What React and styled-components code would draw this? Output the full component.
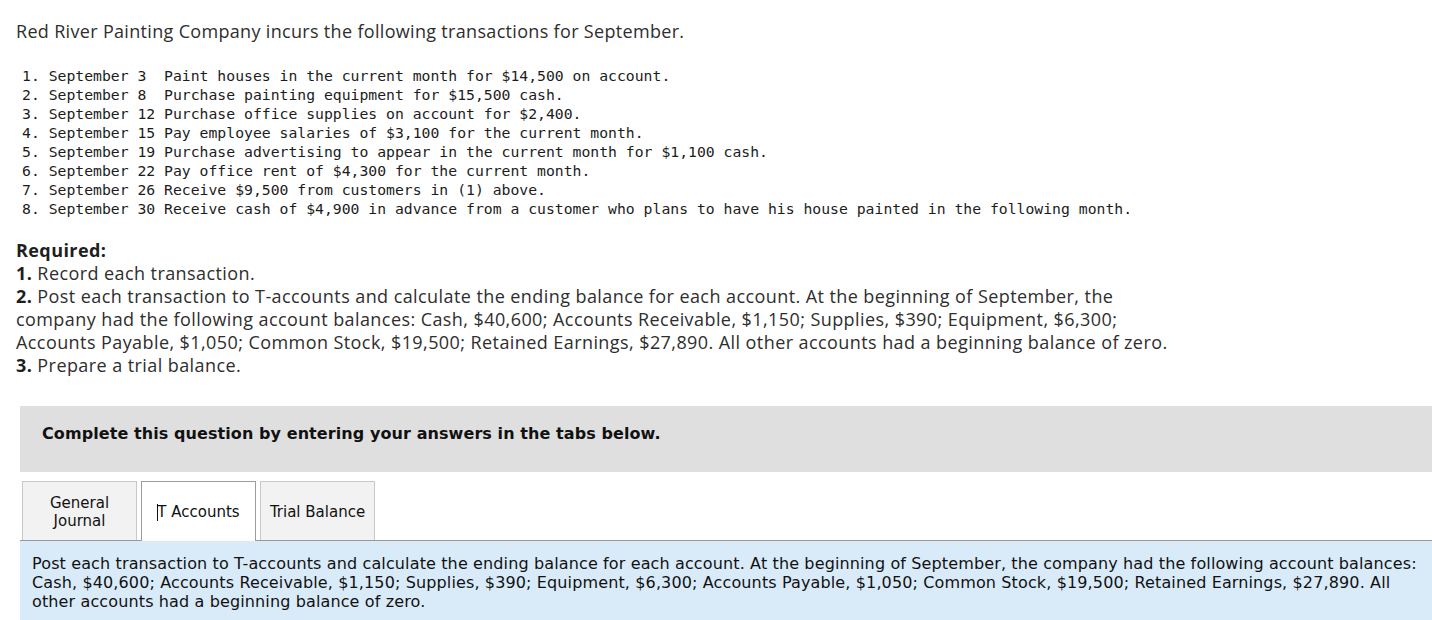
import React from "react";
import styled, { createGlobalStyle } from "styled-components";

const GlobalStyle = createGlobalStyle`
  html, body { margin: 0; padding: 0; background: #ffffff; }
  body { overflow-x: hidden; }
`;

const Page = styled.div`
  padding: 19px 0 0 16px;
  display: flex;
  flex-direction: column;
`;

const Title = styled.p`
  margin: 0;
  font-family: "Open Sans", "Liberation Sans", sans-serif;
  font-size: 18px;
  letter-spacing: 0.32px;
  line-height: 24px;
  color: #2e2e2e;
`;

const TxList = styled.div`
  margin: 23px 0 0 6px;
  font-family: "DejaVu Sans Mono", monospace;
  font-size: 14.75px;
  line-height: 19px;
  color: #1c1c1c;
  white-space: pre;
`;

const TxLine = styled.div``;

const Required = styled.div`
  margin-top: 21px;
  font-family: "Open Sans", "Liberation Sans", sans-serif;
  font-size: 18px;
  letter-spacing: 0.42px;
  line-height: 23px;
  color: #2e2e2e;
`;

const ReqLine = styled.div`
  white-space: nowrap;
`;

const Strong = styled.b`
  font-weight: 700;
  color: #1e1e1e;
`;

const Widget = styled.div`
  margin: 29px 0 0 4px;
  display: flex;
  flex-direction: column;
`;

const Instruction = styled.div`
  background: #dfdfdf;
  height: 66px;
  box-sizing: border-box;
  padding: 18px 22px 0;
  font-family: "DejaVu Sans", Verdana, sans-serif;
  font-weight: 700;
  font-size: 16px;
  letter-spacing: 0.08px;
  line-height: 19px;
  color: #111;
`;

const TabList = styled.div`
  margin-top: 9px;
  padding-left: 2px;
  display: flex;
  gap: 4px;
  align-items: flex-end;
`;

const Tab = styled.div`
  box-sizing: border-box;
  width: 115px;
  height: ${(p) => (p.$active ? "60px" : "59px")};
  margin-bottom: ${(p) => (p.$active ? "-1px" : "0")};
  position: relative;
  z-index: ${(p) => (p.$active ? 1 : 0)};
  background: ${(p) => (p.$active ? "#ffffff" : "#f2f2f2")};
  border: 1px solid ${(p) => (p.$active ? "#9c9c9c" : "#c8c8c8")};
  border-bottom: none;
  display: flex;
  align-items: center;
  justify-content: center;
  text-align: center;
  font-family: "DejaVu Sans", Verdana, sans-serif;
  font-size: 15px;
  line-height: 18px;
  color: #111;
  padding-top: ${(p) => (p.$active ? "1px" : "2px")};
`;

const Caret = styled.span`
  display: inline-block;
  width: 1px;
  height: 17px;
  background: #111;
  vertical-align: -4px;
  margin-right: -1px;
`;

const Panel = styled.div`
  border-top: 1px solid #999;
  background: #d9ebf9;
  padding: 13px 12px 10px;
  font-family: "DejaVu Sans", Verdana, sans-serif;
  font-size: 16px;
  letter-spacing: 0.13px;
  line-height: 19px;
  color: #111;
`;

const PanelLine = styled.div`
  white-space: nowrap;
`;

const transactions = [
  "1. September 3  Paint houses in the current month for $14,500 on account.",
  "2. September 8  Purchase painting equipment for $15,500 cash.",
  "3. September 12 Purchase office supplies on account for $2,400.",
  "4. September 15 Pay employee salaries of $3,100 for the current month.",
  "5. September 19 Purchase advertising to appear in the current month for $1,100 cash.",
  "6. September 22 Pay office rent of $4,300 for the current month.",
  "7. September 26 Receive $9,500 from customers in (1) above.",
  "8. September 30 Receive cash of $4,900 in advance from a customer who plans to have his house painted in the following month.",
];

export default function App() {
  return (
    <>
      <GlobalStyle />
      <Page>
        <Title>Red River Painting Company incurs the following transactions for September.</Title>
        <TxList>
          {transactions.map((t) => (
            <TxLine key={t}>{t}</TxLine>
          ))}
        </TxList>
        <Required>
          <ReqLine>
            <Strong>Required:</Strong>
          </ReqLine>
          <ReqLine>
            <Strong>1.</Strong> Record each transaction.
          </ReqLine>
          <ReqLine>
            <Strong>2.</Strong> Post each transaction to T-accounts and calculate the ending balance for each account. At the beginning of September, the
          </ReqLine>
          <ReqLine>
            company had the following account balances: Cash, $40,600; Accounts Receivable, $1,150; Supplies, $390; Equipment, $6,300;
          </ReqLine>
          <ReqLine>
            Accounts Payable, $1,050; Common Stock, $19,500; Retained Earnings, $27,890. All other accounts had a beginning balance of zero.
          </ReqLine>
          <ReqLine>
            <Strong>3.</Strong> Prepare a trial balance.
          </ReqLine>
        </Required>
        <Widget>
          <Instruction>Complete this question by entering your answers in the tabs below.</Instruction>
          <TabList>
            <Tab>
              General
              <br />
              Journal
            </Tab>
            <Tab $active>
              <span>
                <Caret />T Accounts
              </span>
            </Tab>
            <Tab>Trial Balance</Tab>
          </TabList>
          <Panel>
            <PanelLine>
              Post each transaction to T-accounts and calculate the ending balance for each account. At the beginning of September, the company had the following account balances:
            </PanelLine>
            <PanelLine>
              Cash, $40,600; Accounts Receivable, $1,150; Supplies, $390; Equipment, $6,300; Accounts Payable, $1,050; Common Stock, $19,500; Retained Earnings, $27,890. All
            </PanelLine>
            <PanelLine>other accounts had a beginning balance of zero.</PanelLine>
          </Panel>
        </Widget>
      </Page>
    </>
  );
}
